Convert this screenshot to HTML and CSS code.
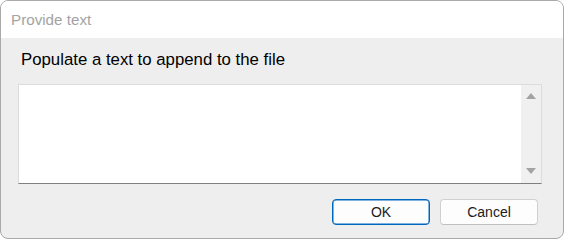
FILE: index.html
```html
<!DOCTYPE html>
<html>
<head>
<meta charset="utf-8">
<link rel="stylesheet" href="styles.css">
</head>
<body>
<div class="window">
  <div class="titlebar">Provide text</div>
  <div class="content">
    <div class="label">Populate a text to append to the file</div>
    <div class="textbox">
      <textarea class="input"></textarea>
      <div class="scrollbar">
        <span class="arrow up"></span>
        <span class="arrow down"></span>
      </div>
    </div>
    <div class="buttons">
      <button class="btn primary">OK</button>
      <button class="btn">Cancel</button>
    </div>
  </div>
</div>
</body>
</html>
```

FILE: styles.css
```css
html, body {
  margin: 0;
  padding: 0;
  background: #ffffff;
}
.window {
  box-sizing: border-box;
  width: 564px;
  height: 239px;
  border: 1px solid #a9a9a9;
  border-radius: 8px;
  overflow: hidden;
  background: #eeeeee;
  display: flex;
  flex-direction: column;
  font-family: "Liberation Sans", Arial, sans-serif;
}
.titlebar {
  height: 37px;
  flex: none;
  background: #ffffff;
  color: #a3a3a3;
  font-size: 15.2px;
  padding-left: 10px;
  display: flex;
  align-items: center;
}
.content {
  flex: 1;
  display: flex;
  flex-direction: column;
  padding: 0 21px 0 17px;
}
.label {
  margin-top: 13px;
  margin-left: 3px;
  font-size: 16.8px;
  line-height: 18px;
  color: #000000;
}
.textbox {
  margin-top: 15px;
  height: 100px;
  box-sizing: border-box;
  border: 1px solid #dcdcdc;
  border-bottom: 1px solid #7f7f7f;
  background: #ffffff;
  display: flex;
}
.input {
  flex: 1;
  border: none;
  outline: none;
  resize: none;
  margin: 0;
  padding: 4px;
  background: #ffffff;
  font-family: inherit;
  font-size: 14px;
}
.scrollbar {
  width: 20px;
  background: #f0f0f0;
  display: flex;
  flex-direction: column;
  justify-content: space-between;
  align-items: center;
  padding: 8px 0 9px;
}
.arrow {
  width: 0;
  height: 0;
  border-left: 5px solid transparent;
  border-right: 5px solid transparent;
}
.arrow.up {
  border-bottom: 6px solid #a3a3a3;
}
.arrow.down {
  border-top: 6px solid #a3a3a3;
}
.buttons {
  margin-top: 15px;
  display: flex;
  justify-content: flex-end;
  gap: 10px;
  padding-right: 4px;
}
.btn {
  box-sizing: border-box;
  width: 98px;
  height: 26px;
  border: 1px solid #d0d0d0;
  border-bottom-color: #c0c0c0;
  border-radius: 4px;
  background: #fdfdfd;
  color: #1b1b1b;
  font-family: "Liberation Sans", Arial, sans-serif;
  font-size: 14px;
  padding: 0;
}
.btn.primary {
  border: 1px solid #0067c0;
  box-shadow: inset 0 0 0 0.5px #0067c0;
}
```
